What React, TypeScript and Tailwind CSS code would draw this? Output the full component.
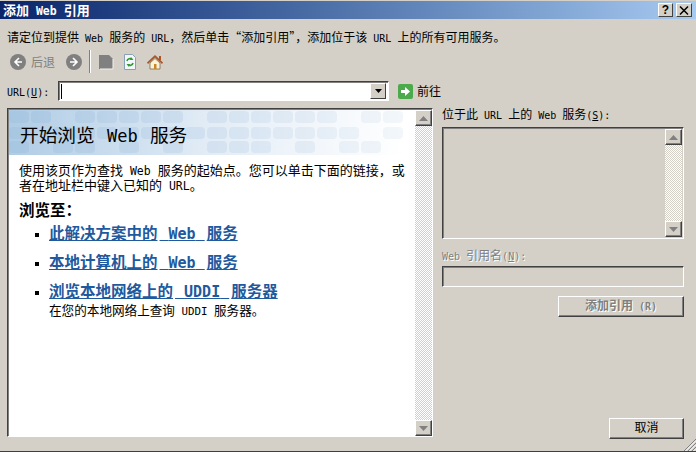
const SONG = "font-['Noto_Sans_CJK_SC','Liberation_Sans',sans-serif]";
const COMMA = "\uFF0C";
const COLON = "\uFF1A";

// latin text in the picture runs at half a 12px character
function L({ children }: { children: string }) {
  return <span className="font-['DejaVu_Sans_Mono',monospace] text-[10px]">{children}</span>;
}

const DITHER =
  "bg-[repeating-conic-gradient(#ffffff_0_25%,#d4d0c8_0_50%)] bg-[length:2px_2px]";

function ScrollBtn({ down = false }: { down?: boolean }) {
  return (
    <div className="flex h-[16px] w-[17px] shrink-0 items-center justify-center border border-t-white border-l-white border-r-[#404040] border-b-[#404040] bg-[#d4d0c8] shadow-[inset_-1px_-1px_0_#808080]">
      <svg width="9" height="5" viewBox="0 0 9 5">
        <path d={down ? "M0 0h9L4.5 5z" : "M0 5h9L4.5 0z"} fill="#808080" />
      </svg>
    </div>
  );
}

function ScrollBar() {
  return (
    <div className={`flex h-full w-[17px] shrink-0 flex-col justify-between ${DITHER}`}>
      <ScrollBtn />
      <ScrollBtn down />
    </div>
  );
}

const sunken =
  "border border-t-[#404040] border-l-[#404040] border-r-white border-b-white shadow-[inset_1px_1px_0_#808080]";

// grid of pale rounded cells behind the page heading
const CELLS: [number, number[]][] = [
  [1, [0, 1, 3, 4, 5, 6, 7, 9, 10, 11, 12, 13, 14, 16, 17]],
  [17, [0, 2, 3, 4, 5, 6, 7, 8, 9, 10, 11, 12, 13, 14, 15, 17]],
  [31, [0, 2, 3, 5, 7, 9, 10, 11, 13, 15, 16]],
];

function Banner() {
  return (
    <div className="relative h-[45px] w-[396px] bg-gradient-to-r from-[#afcce5] via-[#e2ecf6] via-50% to-white">
      <svg className="absolute inset-0" width="396" height="45">
        {CELLS.map(([y, cols]) =>
          cols.map((c) => (
            <rect key={`${y}-${c}`} x={c * 22} y={y} width="20" height="12" rx="4" fill="#8fb4d8" opacity={0.26 - c * 0.009} />
          )),
        )}
      </svg>
      <h1 className="absolute left-[11px] top-[12px] text-[18.7px] leading-[24px] text-black">
        开始浏览
        <span className="mx-[2px] font-['DejaVu_Sans_Mono',monospace] text-[17px] font-light"> Web </span>
        服务
      </h1>
    </div>
  );
}

function Links() {
  const items = [
    ["此解决方案中的", "Web", "服务"],
    ["本地计算机上的", "Web", "服务"],
    ["浏览本地网络上的", "UDDI", "服务器"],
  ];
  return (
    <ul className="mt-[5px] flex flex-col gap-[11px] pl-[26px]">
      {items.map(([a, b, c]) => (
        <li key={a} className="flex h-[18px] items-start gap-[10px]">
          <span className="mt-[10px] h-[4px] w-[4px] shrink-0 bg-black" />
          <a className="block h-[18px] text-[15.5px] font-bold leading-[18px] text-[#1f5a9e] underline">
            {a}
            <span className="mx-[2px] font-['DejaVu_Sans_Mono',monospace] text-[15px]"> {b} </span>
            {c}
          </a>
        </li>
      ))}
    </ul>
  );
}

export default function App() {
  return (
    <div className={`relative flex h-[452px] w-[696px] flex-col overflow-hidden border-b border-b-[#404040] bg-[#d4d0c8] pt-px text-[12px] text-black ${SONG}`}>
      {/* Title bar */}
      <div className="flex h-[18px] shrink-0 items-center justify-between bg-gradient-to-r from-[#0a246a] to-[#a6caf0] pl-[3px] pr-[4px]">
        <span className="text-[13px] font-bold leading-none text-white">
          添加<span className="font-['DejaVu_Sans_Mono',monospace] text-[11.5px]"> Web </span>引用
        </span>
        <div className="flex gap-[3px]">
          <span className="flex h-[14px] w-[15px] items-center justify-center border border-t-white border-l-white border-r-[#404040] border-b-[#404040] bg-[#d4d0c8] font-['Liberation_Sans',sans-serif] text-[12px] font-bold leading-none">
            ?
          </span>
          <span className="flex h-[14px] w-[16px] items-center justify-center border border-t-white border-l-white border-r-[#404040] border-b-[#404040] bg-[#d4d0c8]">
            <svg width="10" height="9" viewBox="0 0 10 9">
              <path d="M1 0.500 9 8.500M9 0.500 1 8.500" stroke="#000" strokeWidth="1.500" fill="none" />
            </svg>
          </span>
        </div>
      </div>

      <p className="ml-[7px] mt-[9px] h-[17px] whitespace-nowrap leading-[17px]">
        请定位到提供<L> Web </L>服务的<L> URL</L>{COMMA}然后单击“添加引用”{COMMA}添加位于该<L> URL </L>上的所有可用服务。
      </p>

      {/* Toolbar */}
      <div className="ml-[10px] mt-[5px] flex h-[23px] items-center">
        <svg width="16" height="16" viewBox="0 0 16 16">
          <circle cx="8" cy="8" r="8" fill="#808080" />
          <path d="M9 4 5 8l4 4M5 8h7" fill="none" stroke="#fff" strokeWidth="1.6" />
        </svg>
        <span className="ml-[5px] w-[35px] text-[#808080]">后退</span>
        <svg width="16" height="16" viewBox="0 0 16 16">
          <circle cx="8" cy="8" r="8" fill="#808080" />
          <path d="m7 4 4 4-4 4M11 8H4" fill="none" stroke="#fff" strokeWidth="1.6" />
        </svg>
        <span className="ml-[7px] h-[23px] w-[2px] border-l border-l-[#808080] border-r border-r-white" />
        <svg className="ml-[7px]" width="16" height="16" viewBox="0 0 16 16">
          <path d="M1 1h10l4 4v10H1z" fill="#808080" />
          <path d="M15 5v10H2" fill="none" stroke="#f4f2ec" />
        </svg>
        <svg className="ml-[8px]" width="16" height="16" viewBox="0 0 16 16">
          <path d="M2.500.5h8l3 3v12h-11z" fill="#f4f6fb" stroke="#8aa0b8" />
          <path d="M5 7a3 3 0 0 1 5-1.500M11 9a3 3 0 0 1-5 1.500" fill="none" stroke="#2f9a2f" strokeWidth="1.6" />
          <path d="m9 3 2.500 3H8zM7 13 4.500 10H8z" fill="#2f9a2f" />
        </svg>
        <svg className="ml-[9px]" width="16" height="16" viewBox="0 0 16 16">
          <path d="M8 1 0 8.500 1 10l7-6.500L15 10l1-1.500z" fill="#a8562a" />
          <path d="M12 2h2v4h-2z" fill="#a8562a" />
          <path d="M3 9 8 4.500 13 9v6H3z" fill="#fbf3d8" stroke="#6b5a3a" strokeWidth=".7" />
          <path d="M7 10h2.500v5H7z" fill="#c8862a" />
        </svg>
      </div>

      {/* URL row */}
      <div className="ml-[7px] mt-[8px] flex h-[20px] items-center">
        <label className="w-[51px] shrink-0">
          <L>URL(</L><span className="underline"><L>U</L></span><L>):</L>
        </label>
        <div className={`flex h-[20px] w-[331px] items-center justify-between bg-white pr-[2px] ${sunken}`}>
          <span className="ml-[2px] h-[15px] w-px bg-black" />
          <div className="flex h-[16px] w-[16px] items-center justify-center border border-t-white border-l-white border-r-[#404040] border-b-[#404040] bg-[#d4d0c8]">
            <svg width="7" height="4" viewBox="0 0 7 4">
              <path d="M0 0h7L3.500 4z" fill="#000" />
            </svg>
          </div>
        </div>
        <svg className="ml-[9px]" width="15" height="15" viewBox="0 0 15 15">
          <rect width="15" height="15" rx="2" fill="#4caa4c" />
          <path d="M3 6h4V3l5 4.500L7 12V9H3z" fill="#fff" />
        </svg>
        <span className="ml-[4px]">前往</span>
      </div>

      {/* Main */}
      <div className="ml-[7px] mt-[7px] flex min-h-0 flex-1 gap-[9px] pr-[12px]">
        <div className={`flex h-[329px] w-[426px] shrink-0 bg-white pl-px pt-px ${sunken}`}>
          <div className="min-w-0 flex-1">
            <Banner />
            <p className="ml-[10px] mr-[8px] mt-[8px] text-[13px] leading-[14px]">
              使用该页作为查找<span className="font-['DejaVu_Sans_Mono',monospace] text-[11.5px]"> Web </span>服务的起始点。您可以单击下面的链接{COMMA}或者在地址栏中键入已知的<span className="font-['DejaVu_Sans_Mono',monospace] text-[11.5px]"> URL</span>。
            </p>
            <h2 className="ml-[10px] mt-[7px] text-[15.5px] font-bold leading-[18px]">浏览至{COLON}</h2>
            <Links />
            <p className="ml-[40px] mt-[4px] text-[12.6px] leading-[14px]">
              在您的本地网络上查询<span className="font-['DejaVu_Sans_Mono',monospace] text-[10.8px]"> UDDI </span>服务器。
            </p>
          </div>
          <ScrollBar />
        </div>

        <div className="flex min-w-0 flex-1 flex-col">
          <label className="-mt-px h-[20px] leading-[14px]">
            位于此<L> URL </L>上的<L> Web </L>服务<L>(</L><span className="underline"><L>S</L></span><L>):</L>
          </label>
          <div className={`flex h-[112px] justify-end py-px pr-px ${sunken}`}>
            <ScrollBar />
          </div>
          <label className="mt-[9px] h-[18px] leading-[14px] text-[#808080] [text-shadow:1px_1px_0_#fff]">
            <L>Web </L>引用名<L>(</L><span className="underline"><L>N</L></span><L>):</L>
          </label>
          <div className={`h-[21px] ${sunken}`} />
          <button className="mt-[9px] ml-auto flex h-[21px] w-[126px] items-start justify-center border border-t-white border-l-white border-r-[#404040] border-b-[#404040] bg-[#d4d0c8] font-bold leading-[16px] text-[#808080] shadow-[inset_-1px_-1px_0_#808080] [text-shadow:1px_1px_0_#fff]">
            <span>添加引用<L> (R)</L></span>
          </button>
          <button className="ml-auto mt-[101px] flex h-[21px] w-[75px] items-start justify-center border border-t-white border-l-white border-r-[#404040] border-b-[#404040] bg-[#d4d0c8] leading-[16px] shadow-[inset_-1px_-1px_0_#808080]">
            取消
          </button>
        </div>
      </div>
      <svg className="absolute left-[683px] top-[439px]" width="13" height="12" viewBox="0 0 13 12">
        <path d="M13 0 1 12M13 4 5 12M13 8 9 12" stroke="#808080" strokeWidth="1" />
        <path d="M13 1.500 2.500 12M13 5.500 6.500 12M13 9.500 10.500 12" stroke="#fff" strokeWidth="1" />
      </svg>
    </div>
  );
}
